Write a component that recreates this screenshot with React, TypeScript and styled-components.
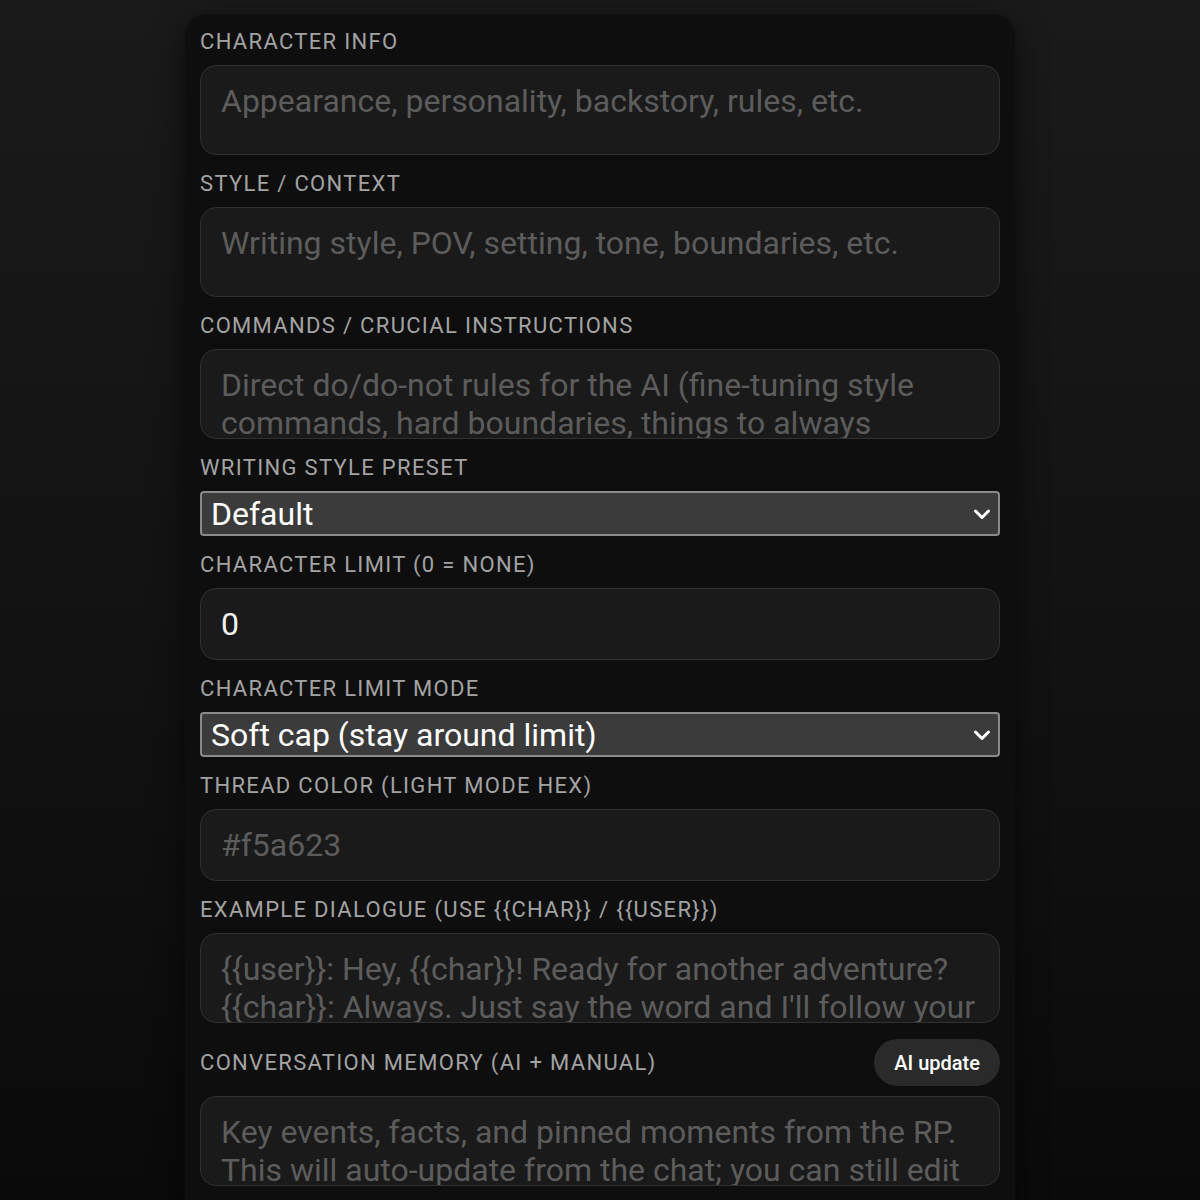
import React from "react";
import styled, { createGlobalStyle } from "styled-components";

const GlobalStyle = createGlobalStyle`
  html, body {
    margin: 0;
    padding: 0;
    min-height: 100%;
  }
  body {
    background: linear-gradient(180deg, #1a1a1a 0%, #121212 55%, #0a0a0a 100%);
    font-family: Roboto, "Noto Sans", "Liberation Sans", sans-serif;
    color: #eaeaea;
    height: 1200px;
    overflow: hidden;
  }
`;

const Page = styled.div`
  display: flex;
  justify-content: center;
  padding-top: 14px;
`;

const Panel = styled.div`
  width: 830px;
  box-sizing: border-box;
  padding: 15px 15px 40px;
  background: #0e0e0e;
  border-radius: 22px;
  box-shadow: 0 8px 30px rgba(0, 0, 0, 0.55);
  display: flex;
  flex-direction: column;
  gap: 16px;
`;

const Field = styled.div`
  display: flex;
  flex-direction: column;
  gap: 10px;
`;

const LabelRow = styled.div`
  display: flex;
  align-items: center;
  justify-content: space-between;
`;

const Label = styled.label`
  font-size: 22px;
  line-height: 26px;
  letter-spacing: 1.32px;
  text-transform: uppercase;
  color: #a3a3a3;
`;

const TextArea = styled.textarea`
  box-sizing: border-box;
  width: 100%;
  height: 90px;
  padding: 16px 20px;
  resize: none;
  overflow: hidden;
  background: #1a1a1a;
  border: 1px solid #303030;
  border-radius: 16px;
  color: #eaeaea;
  font-family: inherit;
  font-size: 32px;
  line-height: 38px;
  outline: none;

  &::placeholder {
    color: #5c5c5c;
  }
`;

const TextInput = styled.input`
  box-sizing: border-box;
  width: 100%;
  height: 72px;
  padding: 0 20px;
  background: #1a1a1a;
  border: 1px solid #303030;
  border-radius: 16px;
  color: #f2f2f2;
  font-family: inherit;
  font-size: 32px;
  outline: none;

  &::placeholder {
    color: #5c5c5c;
  }
`;

const SelectWrap = styled.div`
  position: relative;
`;

const Select = styled.select`
  box-sizing: border-box;
  width: 100%;
  height: 45px;
  padding: 0 40px 0 9px;
  appearance: none;
  background: #3b3b3b;
  border: 2px solid #8a8a8a;
  border-radius: 4px;
  color: #ffffff;
  font-family: inherit;
  font-size: 32px;
  outline: none;
`;

const Chevron = styled.svg`
  position: absolute;
  right: 8px;
  top: 50%;
  transform: translateY(-50%);
  pointer-events: none;
`;

const PillButton = styled.button`
  height: 47px;
  padding: 0 20px;
  border: none;
  border-radius: 24px;
  background: #2a2a2a;
  color: #ffffff;
  font-family: inherit;
  font-size: 20px;
  font-weight: 500;
  cursor: pointer;
`;

const ChevronIcon = () => (
  <Chevron width="20" height="20" viewBox="0 0 20 20">
    <path
      d="M3.5 7 L10 13.5 L16.5 7"
      fill="none"
      stroke="#ffffff"
      strokeWidth="3"
      strokeLinecap="round"
      strokeLinejoin="round"
    />
  </Chevron>
);

type SelectFieldProps = {
  label: string;
  value: string;
  options: string[];
};

const SelectField = ({ label, value, options }: SelectFieldProps) => (
  <Field>
    <Label>{label}</Label>
    <SelectWrap>
      <Select defaultValue={value}>
        {options.map((o) => (
          <option key={o}>{o}</option>
        ))}
      </Select>
      <ChevronIcon />
    </SelectWrap>
  </Field>
);

const AreaField = ({ label, placeholder }: { label: string; placeholder: string }) => (
  <Field>
    <Label>{label}</Label>
    <TextArea placeholder={placeholder} />
  </Field>
);

const App = () => {
  return (
    <>
      <GlobalStyle />
      <Page>
        <Panel>
          <AreaField
            label="Character info"
            placeholder="Appearance, personality, backstory, rules, etc."
          />
          <AreaField
            label="Style / context"
            placeholder="Writing style, POV, setting, tone, boundaries, etc."
          />
          <AreaField
            label="Commands / crucial instructions"
            placeholder="Direct do/do-not rules for the AI (fine-tuning style commands, hard boundaries, things to always include or avoid)."
          />
          <SelectField
            label="Writing style preset"
            value="Default"
            options={["Default", "Descriptive", "Concise", "Dialogue-heavy"]}
          />
          <Field>
            <Label>Character limit (0 = none)</Label>
            <TextInput defaultValue="0" />
          </Field>
          <SelectField
            label="Character limit mode"
            value="Soft cap (stay around limit)"
            options={["Soft cap (stay around limit)", "Hard cap (never exceed)"]}
          />
          <Field>
            <Label>Thread color (light mode hex)</Label>
            <TextInput placeholder="#f5a623" />
          </Field>
          <AreaField
            label="Example dialogue (use {{char}} / {{user}})"
            placeholder={
              "{{user}}: Hey, {{char}}! Ready for another adventure?\n{{char}}: Always. Just say the word and I'll follow your lead."
            }
          />
          <Field>
            <LabelRow>
              <Label>Conversation memory (AI + manual)</Label>
              <PillButton>AI update</PillButton>
            </LabelRow>
            <TextArea placeholder="Key events, facts, and pinned moments from the RP. This will auto-update from the chat; you can still edit it." />
          </Field>
        </Panel>
      </Page>
    </>
  );
};

export default App;
